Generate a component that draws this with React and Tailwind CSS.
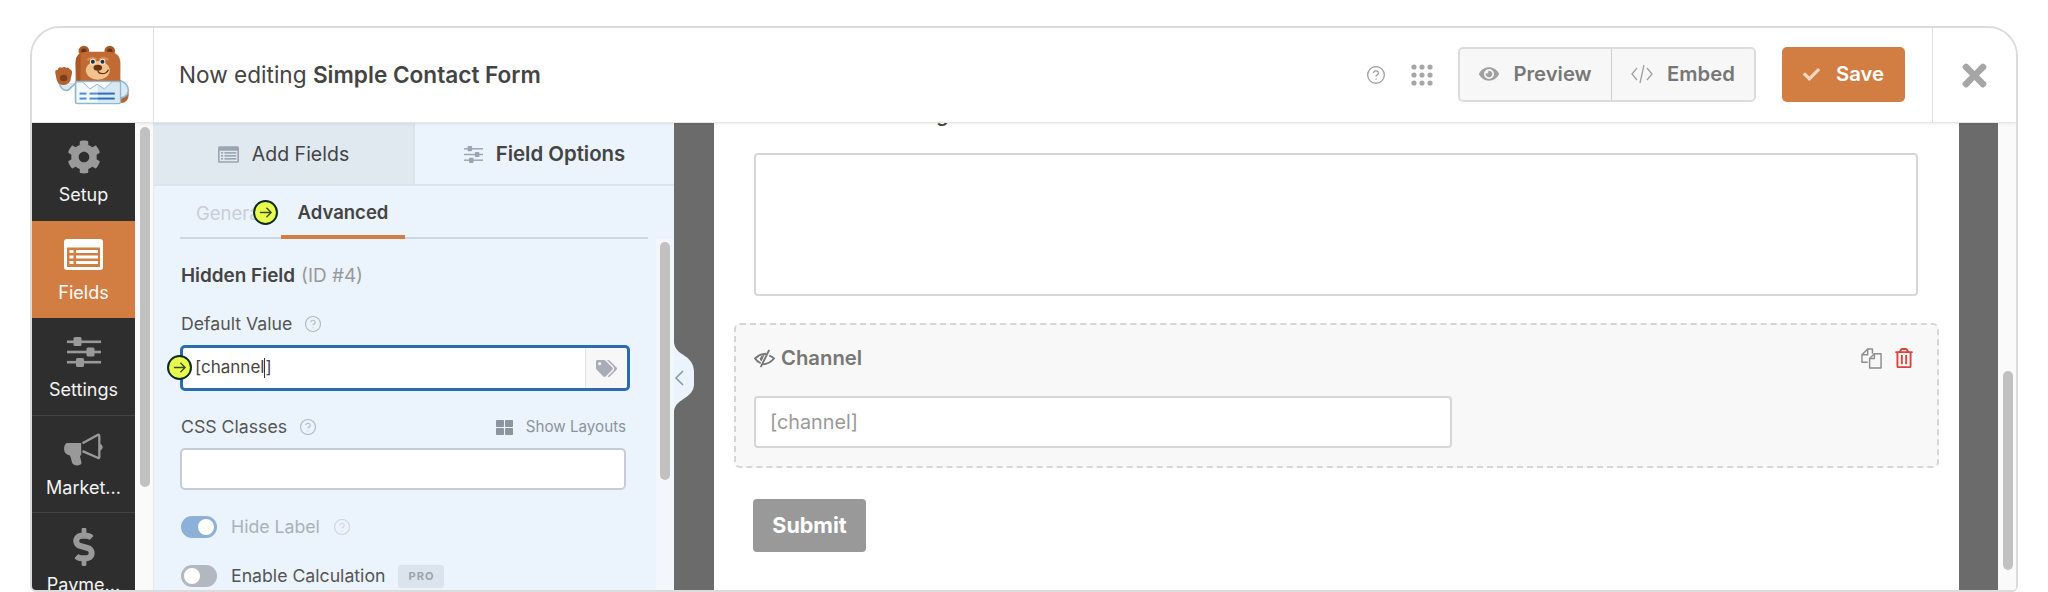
import React from "react";
import { FaCog, FaDollarSign, FaTags, FaThLarge, FaEye, FaCheck, FaTimes, FaRegTrashAlt } from "react-icons/fa";
import { CircleHelp } from "lucide-react";

function Bear() {
  return (
    <svg viewBox="70 40 235 180" className="w-[78px] h-[60px]">
      <ellipse cx="275" cy="190" rx="20" ry="24" fill="#b5622e" />
      <path d="M135 155 L112 176 Q92 180 84 150" fill="#dcebf3" stroke="#8fb8cf" strokeWidth="5" />
      <path d="M268 146 Q294 155 294 178 Q292 195 270 200" fill="#dcebf3" stroke="#8fb8cf" strokeWidth="5" />
      <path d="M74 125 Q72 113 81 115 L83 110 Q88 104 94 108 Q100 104 107 108 Q115 106 117 113 Q126 115 124 126 L119 148 Q110 162 96 160 Q82 158 78 144 Z" fill="#b5622e" />
      <ellipse cx="99" cy="139" rx="11" ry="10" fill="#7a3e1d" />
      <circle cx="160" cy="58" r="16" fill="#a9582a" />
      <circle cx="238" cy="58" r="16" fill="#a9582a" />
      <circle cx="160" cy="58" r="8" fill="#6b3415" />
      <circle cx="238" cy="58" r="8" fill="#6b3415" />
      <path d="M135 95 Q135 62 165 60 L235 60 Q270 62 270 95 L270 165 L135 165 Z" fill="#c26a33" />
      <path d="M138 150 L135 95 Q135 70 150 65 L150 150 Z" fill="#a9582a" />
      <ellipse cx="202" cy="116" rx="36" ry="28" fill="#f0c48c" />
      <path d="M170 85 Q185 72 198 84 M206 84 Q220 72 234 85" fill="#e08b4f" stroke="#e08b4f" strokeWidth="6" />
      <circle cx="187" cy="90" r="9" fill="#f6e9d8" />
      <circle cx="216" cy="90" r="9" fill="#f6e9d8" />
      <circle cx="187" cy="90" r="6" fill="#16364a" />
      <circle cx="216" cy="90" r="6" fill="#16364a" />
      <ellipse cx="202" cy="108" rx="13" ry="9" fill="#6b3415" />
      <path d="M202 116 Q204 126 216 126 Q228 126 234 114" fill="none" stroke="#6b3415" strokeWidth="4" />
      <rect x="135" y="150" width="135" height="66" rx="5" fill="#f3f8fb" stroke="#8fb8cf" strokeWidth="5" />
      <rect x="201" y="153" width="66" height="61" fill="#d8e8f3" />
      <path d="M155 150 L178 172 L200 158 L222 172 L245 150 Z" fill="#fff" stroke="#8fb8cf" strokeWidth="3" />
      <rect x="147" y="183" width="21" height="6" fill="#4a90d9" />
      <rect x="177" y="183" width="24" height="6" fill="#4a90d9" />
      <rect x="201" y="183" width="52" height="6" fill="#2f6db5" />
      <rect x="147" y="198" width="21" height="6" fill="#4a90d9" />
      <rect x="177" y="198" width="24" height="6" fill="#4a90d9" />
      <rect x="201" y="198" width="52" height="6" fill="#2f6db5" />
    </svg>
  );
}

function Sliders({ className }) {
  return (
    <svg viewBox="0 0 34 30" className={className} fill="currentColor">
      <rect x="0" y="3.5" width="34" height="2.6" />
      <rect x="0" y="13.7" width="34" height="2.6" />
      <rect x="0" y="23.9" width="34" height="2.6" />
      <rect x="6.5" y="0" width="8" height="9" rx="1.5" />
      <rect x="19.5" y="10.5" width="8" height="9" rx="1.5" />
      <rect x="9" y="21" width="8" height="9" rx="1.5" />
    </svg>
  );
}

function ListBox({ className, outer, inner }) {
  return (
    <svg viewBox="0 0 39 31" className={className}>
      <rect x="0" y="0" width="39" height="31" rx="3" fill={outer} />
      <rect x="3" y="8.5" width="33" height="19.5" fill={inner} />
      <rect x="5.5" y="11" width="4" height="3" fill={outer} />
      <rect x="5.5" y="16.5" width="4" height="3" fill={outer} />
      <rect x="5.5" y="22" width="4" height="3" fill={outer} />
      <rect x="12" y="11" width="22" height="3" fill={outer} />
      <rect x="12" y="16.5" width="22" height="3" fill={outer} />
      <rect x="12" y="22" width="22" height="3" fill={outer} />
    </svg>
  );
}

function Horn() {
  return (
    <svg viewBox="100 220 118 100" className="w-[39px] h-[33px]">
      <path d="M108 250 H152 V288 H148 L153 312 Q150 319 135 318 Q124 316 122 300 L118 288 Q102 286 100 270 Q100 254 108 250 Z" fill="#999" />
      <path d="M156 251 L203 225 Q207 224 207 230 L207 292 Q207 298 202 295 L156 275" fill="none" stroke="#999" strokeWidth="7" strokeLinejoin="round" />
      <path d="M207 252 Q217 256 217 263 Q217 270 207 274 Z" fill="#999" />
    </svg>
  );
}

function Dots() {
  return (
    <svg viewBox="0 0 22 22" className="w-[22px] h-[22px]" fill="#a6a6a6">
      {[3, 11, 19].map((y) => [3, 11, 19].map((x) => <circle key={x + "-" + y} cx={x} cy={y} r="2.6" />))}
    </svg>
  );
}

function CodeThin() {
  return (
    <svg viewBox="0 0 22 20" className="w-[22px] h-[20px]" fill="none" stroke="#a0a0a0" strokeWidth="1.3">
      <path d="M6 4 L1 10 L6 16 M16 4 L21 10 L16 16 M13 1 L9 19" />
    </svg>
  );
}

function Duplicate() {
  return (
    <svg viewBox="0 0 22 22" className="w-[21px] h-[21px]" fill="none" stroke="#8c8c8c" strokeWidth="1.5" strokeLinejoin="round">
      <path d="M7 15 H1 V7 L7 1 H12 V6" />
      <path d="M7 1 V7 H1" />
      <path d="M9 21 V11 L14 6 H21 V21 Z" fill="#f7f7f7" />
      <path d="M14 6 V11 H9" />
    </svg>
  );
}

function EyeSlash() {
  return (
    <svg viewBox="0 0 22 20" className="w-[21px] h-[19px]" fill="none" stroke="#777" strokeWidth="2">
      <path d="M13 5 Q6 5 1 10 Q3 13 7 15" />
      <path d="M16 7 Q19 8 21 10 Q16 16 9 16" />
      <path d="M16 1 L7 19" />
      <path d="M6 10 Q7 7 11 6 L8 13 Q6 12 6 10 Z" fill="#777" stroke="none" />
    </svg>
  );
}

function Cue({ className }) {
  return (
    <div className={"absolute w-[25px] h-[25px] rounded-full bg-[#e9fb4c] border-2 border-[#0b2b2b] flex items-center justify-center " + className}>
      <svg viewBox="0 0 16 16" className="w-[15px] h-[15px]" fill="none" stroke="#3a4a20" strokeWidth="1.4">
        <path d="M2 8 H14 M9 3 L14 8 L9 13" />
      </svg>
    </div>
  );
}

function NavItem({ icon, label, active, border }) {
  return (
    <div className={"h-[97.5px] shrink-0 flex flex-col items-center pt-[16px] text-[18px] " + (active ? "bg-[#d27d41] text-white" : "text-[#f4f4f4] bg-[#2e2e2e]") + (border ? " border-b border-[#444]" : "")}>
      <div className={"h-[36px] flex items-center justify-center " + (active ? "text-white" : "text-[#999]")}>{icon}</div>
      <div className="mt-[9px] leading-[22px]">{label}</div>
    </div>
  );
}

function Toggle({ on }) {
  return (
    <div className={"w-[36px] h-[22px] rounded-full flex items-center px-[3px] " + (on ? "bg-[#8db0d8] justify-end" : "bg-[#b3b8c0] justify-start")}>
      <div className="w-[16px] h-[16px] rounded-full bg-white" />
    </div>
  );
}

export default function App() {
  return (
    <div className="w-[2048px] h-[592px] bg-white pt-[26px] pl-[30px] overflow-hidden font-['Inter',sans-serif]">
      <div className="w-[1988px] h-[566px] border-2 border-[#dcdcdc] rounded-t-[30px] rounded-b-[6px] overflow-hidden flex flex-col bg-white">
        <header className="h-[95px] shrink-0 flex items-center border-b border-[#e6e6e6] relative z-10 shadow-[0_1px_3px_rgba(0,0,0,0.08)] bg-white">
          <div className="w-[122px] h-full border-r border-[#dedede] flex items-center justify-center">
            <Bear />
          </div>
          <div className="ml-[25px] text-[22.6px] text-[#444]">
            Now editing <span className="font-semibold">Simple Contact Form</span>
          </div>
          <div className="ml-auto flex items-center">
            <CircleHelp size={20} color="#999" strokeWidth={1.5} />
            <div className="ml-[25px]"><Dots /></div>
            <div className="ml-[25px] -mt-[2px] h-[55px] w-[298px] flex bg-[#f7f7f7] border-2 border-[#dcdcdc] rounded-[5px] text-[#777] font-semibold text-[20.3px]">
              <div className="w-[152px] flex items-center justify-center gap-[14px] border-r border-[#cfcfcf]">
                <FaEye size={20} color="#a0a0a0" />
                <span>Preview</span>
              </div>
              <div className="flex-1 flex items-center justify-center gap-[14px]">
                <CodeThin />
                <span>Embed</span>
              </div>
            </div>
            <div className="ml-[26px] -mt-[2px] h-[55px] w-[123px] rounded-[5px] bg-[#d27d41] text-white font-semibold text-[20.3px] flex items-center justify-center gap-[16px]">
              <FaCheck size={17} color="#f3d6c2" />
              <span>Save</span>
            </div>
            <div className="ml-[27px] w-[84px] h-[95px] border-l border-[#dedede] flex items-center justify-center">
              <FaTimes size={35} color="#a6a6a6" />
            </div>
          </div>
        </header>

        <div className="flex-1 flex min-h-0 relative">
          <nav className="w-[103px] shrink-0 flex flex-col overflow-hidden">
            <NavItem icon={<FaCog size={34} />} label="Setup" />
            <NavItem active icon={<ListBox className="w-[39px] h-[31px]" outer="#ffffff" inner="#d27d41" />} label="Fields" />
            <NavItem border icon={<Sliders className="w-[34px] h-[30px]" />} label="Settings" />
            <NavItem border icon={<Horn />} label="Market..." />
            <NavItem icon={<FaDollarSign size={38} />} label="Payme..." />
          </nav>
          <div className="w-[19px] shrink-0 bg-[#fafafa] border-r border-[#e8e8e8] pl-[5px] pt-[4px]">
            <div className="w-[10px] h-[360px] rounded-full bg-[#c1c1c1]" />
          </div>

          <aside className="w-[520px] shrink-0 bg-[#ebf3fc] flex flex-col relative">
            <div className="h-[63px] shrink-0 flex border-b-2 border-[#dbe3ec]">
              <div className="w-[261px] pt-[2px] bg-[#e0e8f0] border-r-2 border-[#dbe3ec] flex items-center justify-center gap-[13px] text-[#444] text-[19.5px]">
                <ListBox className="w-[21px] h-[17px]" outer="#9aa5b1" inner="#e0e8f0" />
                <span>Add Fields</span>
              </div>
              <div className="flex-1 pt-[2px] flex items-center justify-center gap-[13px] text-[#444] font-semibold text-[20.4px]">
                <Sliders className="w-[19px] h-[19px] text-[#9aa5b1]" />
                <span>Field Options</span>
              </div>
            </div>
            <div className="mx-[26px] h-[53px] shrink-0 border-b-2 border-[#ced7e0] flex items-center text-[18.5px] relative">
              <span className="ml-[16px] pt-[5px] w-[85px] text-[#c8ced6] overflow-hidden whitespace-nowrap">General</span>
              <div className="w-[124px] h-[53px] pt-[5px] border-b-[4px] border-[#d27d41] flex items-center justify-center font-semibold text-[#444] relative top-[1px]">Advanced</div>
              <Cue className="left-[73px] top-[14px]" />
            </div>
            <div className="flex-1 flex min-h-0">
              <div className="flex-1 pl-[26px] pt-[26px] relative text-[#555] text-[17.7px]">
                <div className="pl-[1px] h-[22px] flex items-center font-semibold text-[#444] text-[18.9px] whitespace-nowrap">
                  Hidden Field <span className="ml-[6px] font-normal text-[#999]">(ID #4)</span>
                </div>
                <div className="pl-[1px] mt-[26px] h-[22px] flex items-center gap-[12px]">
                  Default Value <CircleHelp size={18} color="#b0b8c2" strokeWidth={1.5} />
                </div>
                <div className="mt-[10px] relative w-[450px] h-[46px] bg-white border-[3px] border-[#2a6cb0] rounded-[5px] flex items-center pl-[12px] text-[#444] text-[17px]">
                  <span>[channel</span><span className="w-px h-[20px] bg-[#333]" /><span>]</span>
                  <div className="absolute right-0 top-0 bottom-0 w-[42px] bg-[#f7f7f7] border-l border-[#e3e3e3] rounded-r-[3px] flex items-center justify-center">
                    <FaTags size={21} color="#a8adb5" />
                  </div>
                </div>
                <Cue className="left-[13px] top-[116px]" />
                <div className="pl-[1px] mt-[25px] w-[446px] h-[22px] flex items-center gap-[12px]">
                  CSS Classes <CircleHelp size={18} color="#b0b8c2" strokeWidth={1.5} />
                  <div className="ml-auto flex items-center gap-[13px] text-[15.2px] text-[#8c94a0]">
                    <FaThLarge size={17} />
                    <span>Show Layouts</span>
                  </div>
                </div>
                <div className="mt-[10px] w-[446px] h-[42px] bg-white border-2 border-[#c5ccd5] rounded-[5px]" />
                <div className="pl-[1px] mt-[26px] h-[22px] flex items-center text-[#a9b1bb]">
                  <Toggle on />
                  <span className="ml-[14px]">Hide Label</span>
                  <CircleHelp size={18} color="#cdd4dc" strokeWidth={1.5} className="ml-[13px]" />
                </div>
                <div className="pl-[1px] mt-[27px] h-[22px] flex items-center">
                  <Toggle />
                  <span className="ml-[14px]">Enable Calculation</span>
                  <span className="ml-[13px] w-[46px] h-[23px] rounded-[3px] bg-[#dbe3ec] flex items-center justify-center text-[11px] font-bold tracking-[1px] text-[#9aa3ae]">PRO</span>
                </div>
              </div>
              <div className="w-[18px] shrink-0 bg-[#f3f6fa] pl-[4px] pt-[3px]">
                <div className="w-[10px] h-[238px] rounded-full bg-[#c1c1c1]" />
              </div>
            </div>
            <svg viewBox="0 0 20 68" className="absolute left-[520px] top-[220px] w-[20px] h-[68px] z-10">
              <path d="M0 0 Q1 7 8 11 Q20 18 20 28 L20 42 Q20 50 8 57 Q1 61 0 68 Z" fill="#ebf3fc" />
              <path d="M9 28 L2 35 L9 42" fill="none" stroke="#8a99aa" strokeWidth="1.6" />
            </svg>
          </aside>

          <main className="flex-1 flex min-w-0">
            <div className="w-[40px] bg-[#6b6b6b] shrink-0" />
            <div className="w-[1245px] shrink-0 bg-white overflow-hidden relative">
              <div className="pl-[40px] -mt-[21px] h-[26px] text-[19.4px] leading-[26px] text-[#444] font-semibold whitespace-nowrap">Comment or Message</div>
              <div className="ml-[40px] mt-[25px] w-[1164px] h-[143px] border-2 border-[#d6d6d6] rounded-[4px]" />
              <div className="ml-[20px] mt-[27px] w-[1205px] h-[145px] border-2 border-dashed border-[#d6d6d6] rounded-[6px] bg-[#f8f8f8] px-[18px] pt-[22px]">
                <div className="h-[22px] flex items-center text-[20.3px] font-semibold text-[#777]">
                  <EyeSlash />
                  <span className="ml-[6px]">Channel</span>
                  <div className="ml-auto mr-[5px] flex items-center gap-[12px]">
                    <Duplicate />
                    <FaRegTrashAlt size={20} color="#d8433a" />
                  </div>
                </div>
                <div className="mt-[27px] w-[698px] h-[52px] pt-[1px] bg-white border-2 border-[#d6d6d6] rounded-[4px] flex items-center px-[14px] text-[19.8px] text-[#999]">[channel]</div>
              </div>
              <div className="ml-[39px] mt-[31px] w-[113px] h-[53px] rounded-[4px] bg-[#999] text-white font-bold text-[21.5px] flex items-center justify-center">Submit</div>
            </div>
            <div className="w-[39px] bg-[#6b6b6b] shrink-0" />
            <div className="flex-1 bg-[#fafafa] pl-[5px] pt-[248px]">
              <div className="w-[10px] h-[199px] rounded-full bg-[#c1c1c1]" />
            </div>
          </main>
        </div>
      </div>
    </div>
  );
}
